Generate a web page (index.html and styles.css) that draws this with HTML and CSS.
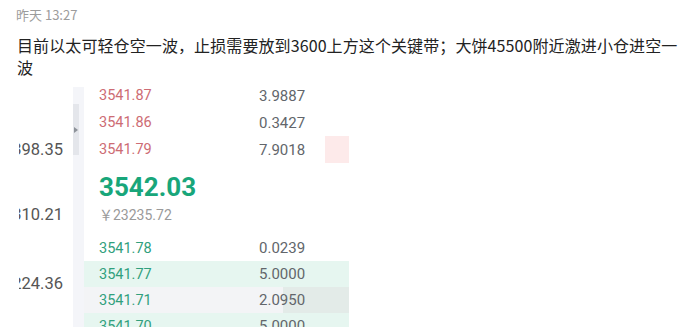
FILE: index.html
```html
<!DOCTYPE html>
<html lang="zh-CN">
<head>
  <meta charset="UTF-8">
  <title>聊天记录</title>
  <link rel="stylesheet" href="styles.css">
</head>
<body>

<div class="msg">
  <div class="time">昨天 13:27</div>
  <p class="text">目前以太可轻仓空一波，止损需要放到3600上方这个关键带；大饼45500附近激进小仓进空一波</p>

  <div class="shot">
    <div class="side">
      <div class="side-num n1">3398.35</div>
      <div class="side-num n2">3310.21</div>
      <div class="side-num n3">3224.36</div>
    </div>

    <div class="divider">
      <div class="handle"><span class="arrow"></span></div>
    </div>

    <div class="book">
      <div class="row ask"><span class="price">3541.87</span><span class="amount">3.9887</span></div>
      <div class="row ask"><span class="price">3541.86</span><span class="amount">0.3427</span></div>
      <div class="row ask"><span class="price">3541.79</span><span class="amount">7.9018</span><span class="depth red" style="width: 24px;"></span></div>

      <div class="last">
        <div class="last-price">3542.03</div>
        <div class="last-cny">￥23235.72</div>
      </div>

      <div class="row bid"><span class="price">3541.78</span><span class="amount">0.0239</span></div>
      <div class="row bid hl"><span class="price">3541.77</span><span class="amount">5.0000</span></div>
      <div class="row bid grey"><span class="price">3541.71</span><span class="amount">2.0950</span><span class="depth green" style="width: 66px;"></span></div>
      <div class="row bid hl"><span class="price">3541.70</span><span class="amount">5.0000</span></div>
    </div>
  </div>
</div>

</body>
</html>
```

FILE: styles.css
```css
body {
  margin: 0;
  background: #fff;
  font-family: "Noto Sans CJK SC", "Noto Sans", sans-serif;
  overflow: hidden;
}
.msg {
  padding: 5px 0 0 16px;
}
.time {
  font-size: 13px;
  line-height: 20px;
  color: #9c9c9c;
}
.text {
  margin: 9px 0 0 1px;
  width: 668px;
  font-size: 16px;
  letter-spacing: 0.1px;
  line-height: 22px;
  color: #222;
}
.shot {
  display: flex;
  margin-top: 9px;
  height: 250px;
  font-family: Roboto, "Liberation Sans", sans-serif;
}
.side {
  width: 54px;
  margin-left: 3px;
  overflow: hidden;
  display: flex;
  flex-direction: column;
  align-items: flex-end;
}
.side-num {
  font-size: 16.5px;
  line-height: 20px;
  color: #555;
  padding-right: 10px;
  white-space: nowrap;
}
.n1 { margin-top: 53px; }
.n2 { margin-top: 45px; }
.n3 { margin-top: 49px; }
.divider {
  width: 11px;
  background: #f4f5f9;
}
.handle {
  width: 6px;
  height: 51px;
  margin-top: 17px;
  background: #e4e6eb;
  display: flex;
  align-items: center;
}
.arrow {
  margin-left: 1px;
  border-left: 4px solid #8d9299;
  border-top: 3.5px solid transparent;
  border-bottom: 3.5px solid transparent;
}
.book {
  width: 265px;
  margin-top: -5px;
}
.row {
  position: relative;
  display: flex;
  align-items: center;
  height: 27px;
  padding-left: 15px;
  font-size: 14.5px;
}
.bid {
  height: 26px;
}
.price {
  width: 160px;
}
.ask .price { color: #cd6c74; }
.bid .price { color: #31a07d; }
.amount {
  position: relative;
  z-index: 1;
  font-size: 15px;
  color: #62666b;
}
.hl { background: #e6f6f0; }
.grey { background: #f3f4f6; }
.depth {
  position: absolute;
  right: 0;
  top: 0;
  bottom: 0;
}
.depth.red { background: #fdeaea; }
.depth.green { background: #e3ebe8; }
.last {
  padding: 8px 0 10px 15px;
}
.last-price {
  font-size: 26px;
  font-weight: bold;
  line-height: 32px;
  color: #18a67a;
}
.last-cny {
  margin-top: 2px;
  font-size: 14px;
  line-height: 20px;
  color: #9a9a9a;
}
```
